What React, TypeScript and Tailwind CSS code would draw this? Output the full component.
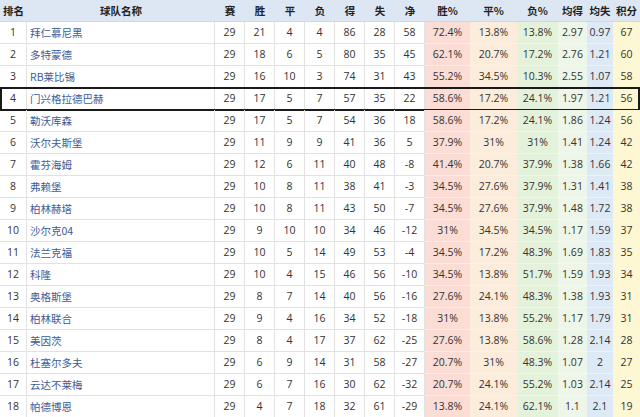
import React from "react";

type Row = [number, string, number, number, number, number, number, number, number, string, string, string, string, string, number];

const rows: Row[] = [
  [1, "拜仁慕尼黑", 29, 21, 4, 4, 86, 28, 58, "72.4%", "13.8%", "13.8%", "2.97", "0.97", 67],
  [2, "多特蒙德", 29, 18, 6, 5, 80, 35, 45, "62.1%", "20.7%", "17.2%", "2.76", "1.21", 60],
  [3, "RB莱比锡", 29, 16, 10, 3, 74, 31, 43, "55.2%", "34.5%", "10.3%", "2.55", "1.07", 58],
  [4, "门兴格拉德巴赫", 29, 17, 5, 7, 57, 35, 22, "58.6%", "17.2%", "24.1%", "1.97", "1.21", 56],
  [5, "勒沃库森", 29, 17, 5, 7, 54, 36, 18, "58.6%", "17.2%", "24.1%", "1.86", "1.24", 56],
  [6, "沃尔夫斯堡", 29, 11, 9, 9, 41, 36, 5, "37.9%", "31%", "31%", "1.41", "1.24", 42],
  [7, "霍芬海姆", 29, 12, 6, 11, 40, 48, -8, "41.4%", "20.7%", "37.9%", "1.38", "1.66", 42],
  [8, "弗赖堡", 29, 10, 8, 11, 38, 41, -3, "34.5%", "27.6%", "37.9%", "1.31", "1.41", 38],
  [9, "柏林赫塔", 29, 10, 8, 11, 43, 50, -7, "34.5%", "27.6%", "37.9%", "1.48", "1.72", 38],
  [10, "沙尔克04", 29, 9, 10, 10, 34, 46, -12, "31%", "34.5%", "34.5%", "1.17", "1.59", 37],
  [11, "法兰克福", 29, 10, 5, 14, 49, 53, -4, "34.5%", "17.2%", "48.3%", "1.69", "1.83", 35],
  [12, "科隆", 29, 10, 4, 15, 46, 56, -10, "34.5%", "13.8%", "51.7%", "1.59", "1.93", 34],
  [13, "奥格斯堡", 29, 8, 7, 14, 40, 56, -16, "27.6%", "24.1%", "48.3%", "1.38", "1.93", 31],
  [14, "柏林联合", 29, 9, 4, 16, 34, 52, -18, "31%", "13.8%", "55.2%", "1.17", "1.79", 31],
  [15, "美因茨", 29, 8, 4, 17, 37, 62, -25, "27.6%", "13.8%", "58.6%", "1.28", "2.14", 28],
  [16, "杜塞尔多夫", 29, 6, 9, 14, 31, 58, -27, "20.7%", "31%", "48.3%", "1.07", "2", 27],
  [17, "云达不莱梅", 29, 6, 7, 16, 30, 62, -32, "20.7%", "24.1%", "55.2%", "1.03", "2.14", 25],
  [18, "帕德博恩", 29, 4, 7, 18, 32, 61, -29, "13.8%", "24.1%", "62.1%", "1.1", "2.1", 19],
];

const headers = ["排名", "球队名称", "赛", "胜", "平", "负", "得", "失", "净", "胜%", "平%", "负%", "均得", "均失", "积分"];

const tints = [
  "border-[#e2e2e2]",
  "border-[#e2e2e2]",
  "border-[#e2e2e2]",
  "border-[#e2e2e2]",
  "border-[#e2e2e2]",
  "border-[#e2e2e2]",
  "border-[#e2e2e2]",
  "border-[#e2e2e2]",
  "border-[#e2e2e2]",
  "bg-[#fbddd6] border-[#f6eeec]",
  "bg-[#fcecdc] border-[#f8f2ec]",
  "bg-[#e4f2dc] border-[#f0f6ec]",
  "bg-[#edf6e8] border-[#f4f8f2]",
  "bg-[#ddeaf5] border-[#eef3f8]",
  "bg-[#fdf7d3] border-[#f8f5e8]",
];

const grid =
  "grid grid-cols-[27px_188px_30px_30px_30px_30px_30px_30px_30px_45px_47px_41px_29px_26px_27px]";

export default function App() {
  return (
    <div
      className="w-[640px] h-[417px] overflow-hidden bg-white text-[10.5px] text-[#333]"
      style={{ fontFamily: '"Open Sans", "Noto Sans CJK SC", sans-serif' }}
    >
      <div className={`${grid} h-[22px] bg-[#dce7f3] border-b border-[#d0d8e2]`}>
        {headers.map((h, i) => (
          <div
            key={i}
            className="flex items-center justify-center font-bold text-[#222]"
            style={{ fontFamily: '"Noto Sans CJK SC", sans-serif' }}
          >
            {h}
          </div>
        ))}
      </div>
      {rows.map((r) => (
        <div key={r[0]} className={`${grid} relative h-[22px]`}>
          {r.map((v, i) => (
            <div
              key={i}
              className={`flex items-center border-b ${
                i === 1 ? "justify-start pl-[3px] text-[#3b5c98]" : "justify-center"
              } ${i <= 8 ? "border-r" : ""} ${tints[i]}`}
              style={i === 1 ? { fontFamily: '"Noto Sans CJK SC", sans-serif' } : undefined}
            >
              {v}
            </div>
          ))}
          {r[0] === 4 && (
            <div className="pointer-events-none absolute left-0 right-0 -top-[1px] -bottom-[1px] border-2 border-[#1a1a1a]" />
          )}
        </div>
      ))}
    </div>
  );
}
